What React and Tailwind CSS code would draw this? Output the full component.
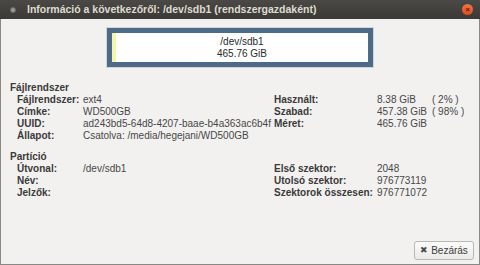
import React from 'react';

const font = { fontFamily: '"Liberation Sans", Arial, sans-serif' };

const Row = ({ label, value, rlabel, rvalue, rpct }) => (
  <div className="flex h-[12px] items-center leading-[12px]">
    <div className="w-[66px] shrink-0 font-bold">{label}</div>
    <div className="w-[191px] shrink-0 whitespace-nowrap text-[#474747]">{value}</div>
    <div className="w-[103px] shrink-0 font-bold">{rlabel}</div>
    <div className="w-[55px] shrink-0 text-[#474747]">{rvalue}</div>
    <div className="whitespace-pre text-[#474747]">{rpct}</div>
  </div>
);

const App = () => {
  return (
    <div className="w-[480px] h-[265px] flex flex-col bg-[#f2f1f0] text-[10px] text-[#3a3a3a] overflow-hidden" style={font}>
      {/* title bar */}
      <div className="h-[19px] shrink-0 flex items-center bg-gradient-to-b from-[#4a4945] to-[#3a3935] text-[#dfdbd2]">
        <div className="ml-[10px] w-[6px] h-[6px] rounded-full bg-[#9a9893] border border-[#6b6a65]"></div>
        <div className="ml-[11px] font-bold text-[10.5px]">Információ a következőről: /dev/sdb1 (rendszergazdaként)</div>
        <div className="ml-auto mr-[7px] w-[11px] h-[11px] rounded-full bg-gradient-to-b from-[#f07746] to-[#df4a16] flex items-center justify-center text-[#5a1d08] text-[8px] leading-none font-bold">×</div>
      </div>

      <div className="flex-1 flex flex-col border-x border-b border-[#8a8884]">
        {/* usage bar */}
        <div className="mt-[8px] self-center w-[268px] h-[41px] border border-[#d6d4d1]">
          <div className="w-full h-full border-[5px] border-[#4c6a8a] bg-white flex">
            <div className="w-[4px] bg-[#f5f4a8]"></div>
            <div className="flex-1 flex flex-col items-center justify-center leading-[12px] text-[#2a2a2a]">
              <span>/dev/sdb1</span>
              <span>465.76 GiB</span>
            </div>
          </div>
        </div>

        {/* filesystem section */}
        <div className="mt-[14px] pl-[9px]">
          <div className="font-bold h-[12px] leading-[12px]">Fájlrendszer</div>
          <div className="pl-[7px]">
            <Row label="Fájlrendszer:" value="ext4" rlabel="Használt:" rvalue="8.38 GiB" rpct="( 2% )" />
            <Row label="Címke:" value="WD500GB" rlabel="Szabad:" rvalue="457.38 GiB" rpct="( 98% )" />
            <Row label="UUID:" value="ad243bd5-64d8-4207-baae-b4a363ac6b4f" rlabel="Méret:" rvalue="465.76 GiB" />
            <Row label="Állapot:" value="Csatolva: /media/hegejani/WD500GB" />
          </div>
        </div>

        {/* partition section */}
        <div className="mt-[9px] pl-[9px]">
          <div className="font-bold h-[12px] leading-[12px]">Partíció</div>
          <div className="pl-[7px]">
            <Row label="Útvonal:" value="/dev/sdb1" rlabel="Első szektor:" rvalue="2048" />
            <Row label="Név:" rlabel="Utolsó szektor:" rvalue="976773119" />
            <Row label="Jelzők:" rlabel="Szektorok összesen:" rvalue="976771072" />
          </div>
        </div>

        <div className="mt-auto mb-[4px] mr-[5px] self-end">
          <button className="h-[19px] w-[60px] flex items-center justify-center gap-[3px] rounded-[3px] border border-[#b9b7b2] bg-gradient-to-b from-[#fbfbfa] to-[#eceae7] text-[10px] text-[#3c3c3c]" style={font}>
            <span className="text-[9px] text-[#4a4a4a]">✖</span>
            <span>Bezárás</span>
          </button>
        </div>
      </div>
    </div>
  );
};

export default App;
